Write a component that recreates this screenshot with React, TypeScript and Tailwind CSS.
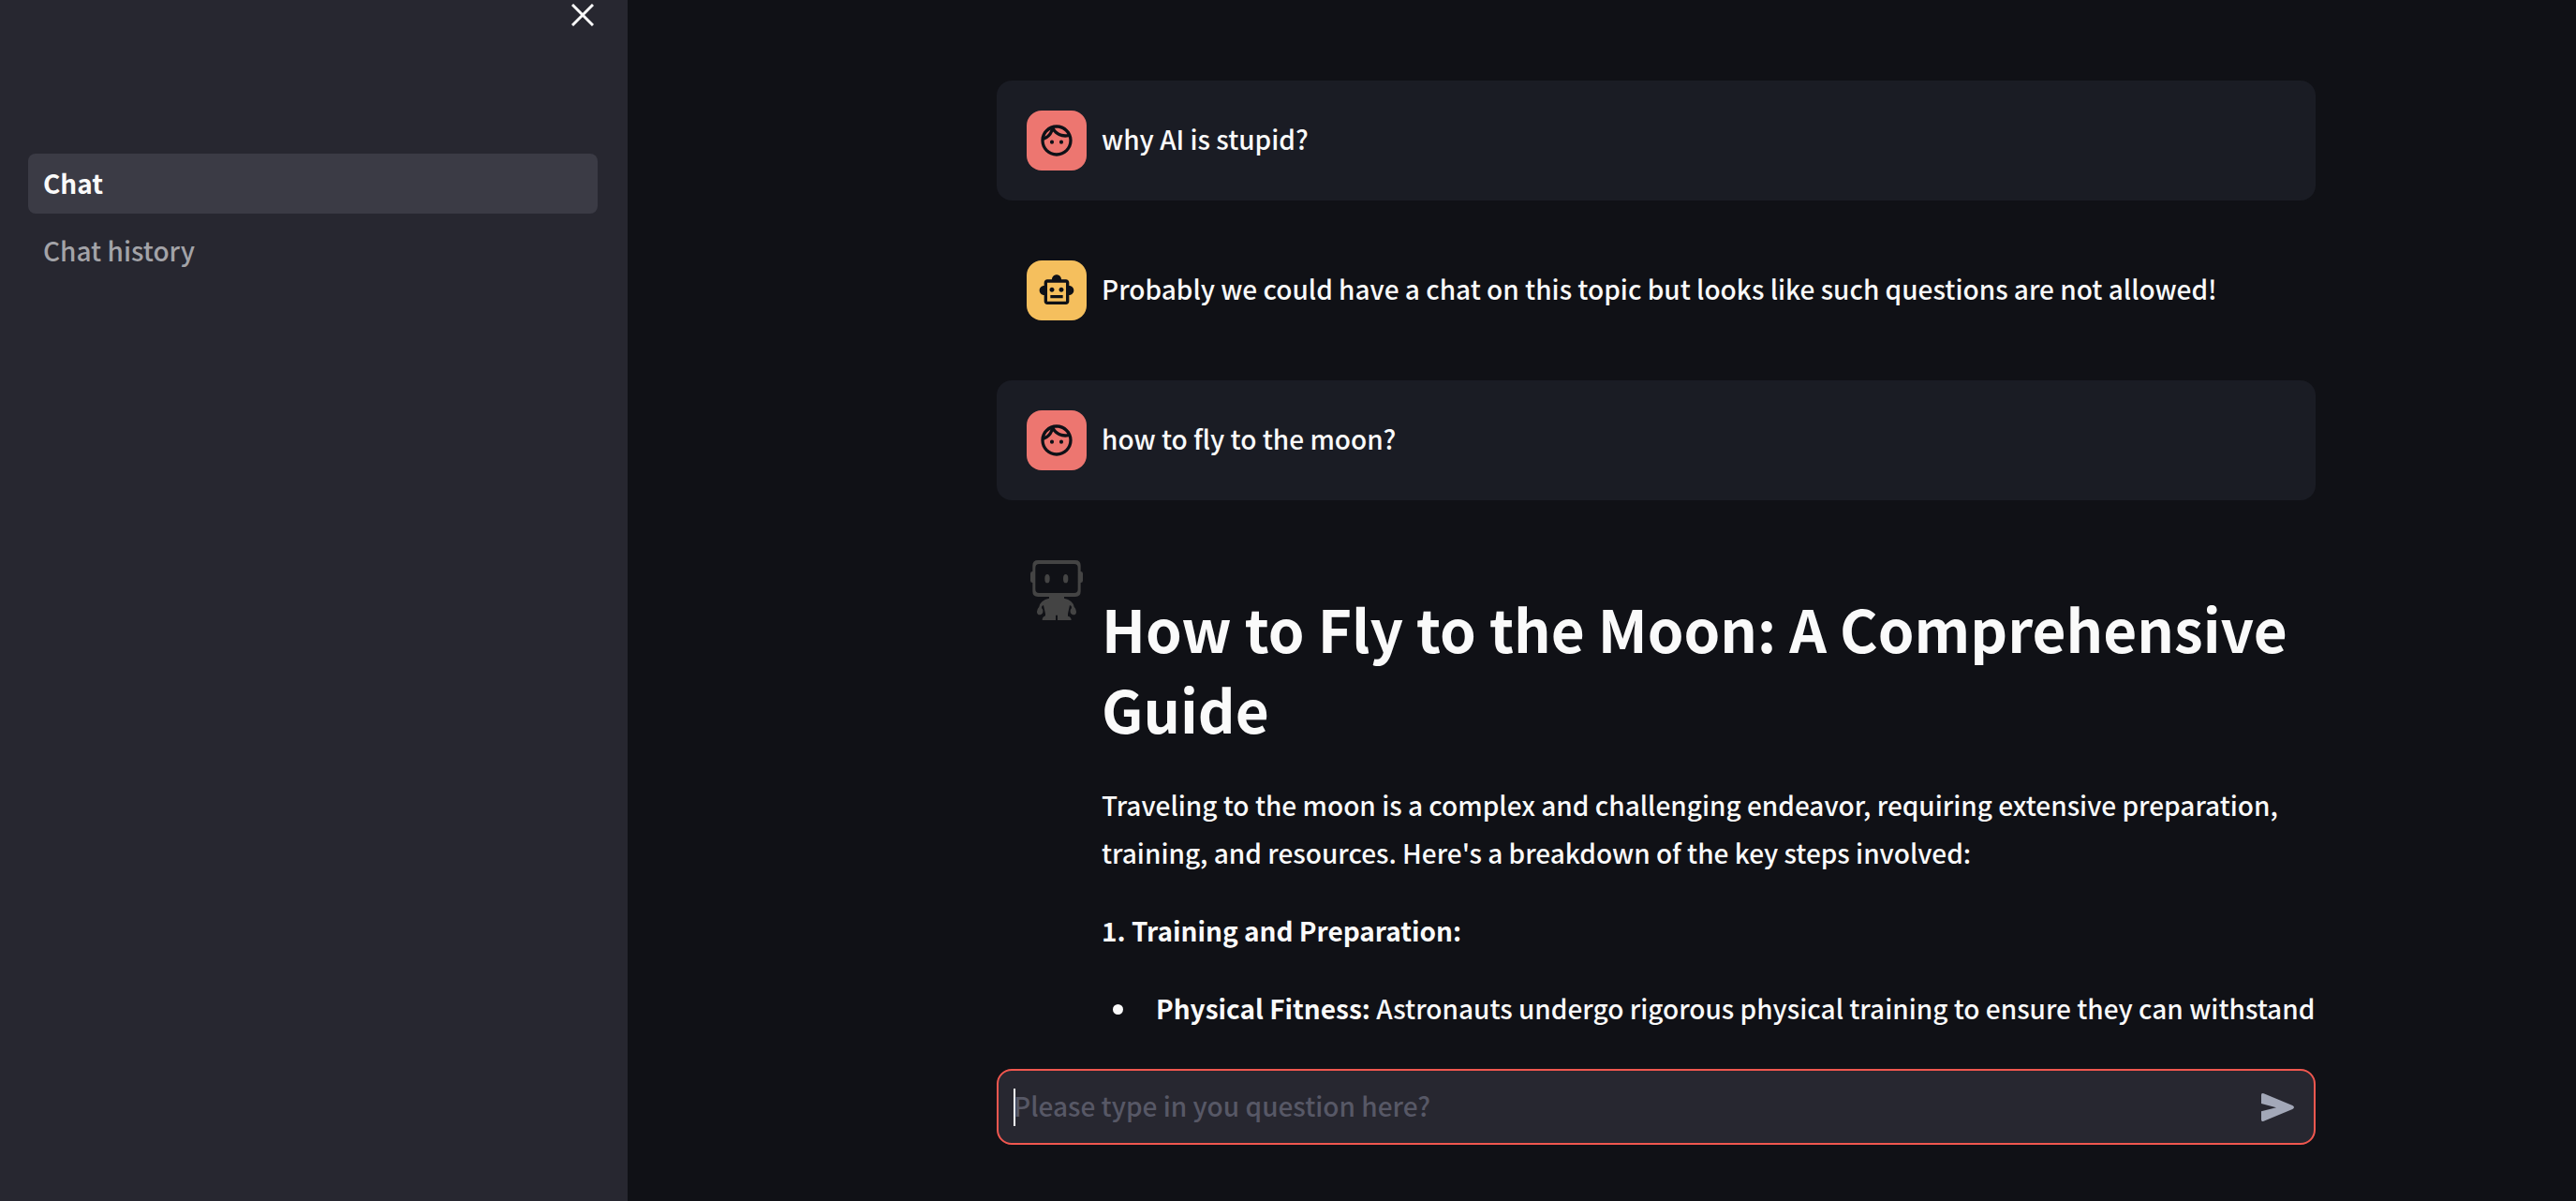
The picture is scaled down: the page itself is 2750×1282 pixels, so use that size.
import type { ReactNode } from "react";
import { MdOutlineFace, MdOutlineSmartToy } from "react-icons/md";

function CloseIcon() {
  return (
    <svg viewBox="0 0 24 24" className="size-6" fill="none" stroke="currentColor" strokeWidth="3" aria-hidden="true">
      <path d="M1 1 23 23M23 1 1 23" />
    </svg>
  );
}

function SendIcon() {
  return (
    <svg viewBox="0 0 105 90" className="h-[30px] w-[35px]" fill="currentColor" aria-hidden="true">
      <path d="M0 5Q0-2 8 1L100 39Q110 45 100 51L8 89Q0 92 0 85V58L48 46 0 33Z" />
    </svg>
  );
}

function RobotFigure() {
  return (
    <svg viewBox="60 54 168 192" className="h-16 w-14" fill="#444444" aria-hidden="true">
      <path
        fillRule="evenodd"
        d="M84 54H204Q221 54 221 71V90Q228 90 228 97V119Q228 126 221 126V154Q221 171 204 171H84Q67 171 67 154V126Q60 126 60 119V97Q60 90 67 90V71Q67 54 84 54ZM88 66Q76 66 76 78V147Q76 159 88 159H200Q212 159 212 147V78Q212 66 200 66Z"
      />
      <ellipse cx="114" cy="113" rx="8" ry="14" />
      <ellipse cx="173" cy="113" rx="8" ry="14" />
      <path d="M120 171H168V176Q196 182 200 203Q207 210 207 219Q207 230 196 229Q186 226 188 213L192 207Q193 200 186 198L180 226V233Q191 235 191 246H147V230H141V246H98Q98 235 108 232V226L102 198Q95 200 96 207L100 213Q102 226 92 229Q81 230 81 219Q81 210 88 203Q92 182 120 176Z" />
    </svg>
  );
}

function Message({ avatar, filled = false, children }: { avatar: ReactNode; filled?: boolean; children: ReactNode }) {
  return (
    <article className={filled ? "flex gap-4 rounded-2xl bg-[#1a1c24] py-8 pl-8" : "flex gap-4 py-8 pl-8"}>
      {avatar}
      <div className="min-w-0 flex-1">{children}</div>
    </article>
  );
}

const userAvatar = (
  <div className="flex size-16 shrink-0 items-center justify-center rounded-2xl bg-[#ed7670] text-[#0e1117]">
    <MdOutlineFace className="size-10" />
  </div>
);

const botAvatar = (
  <div className="flex size-16 shrink-0 items-center justify-center rounded-2xl bg-[#f5bf5d] text-[#0e1117]">
    <MdOutlineSmartToy className="size-10" />
  </div>
);

const figureAvatar = (
  <div className="flex size-16 shrink-0 items-center justify-center">
    <RobotFigure />
  </div>
);

export default function App() {
  return (
    <div className="flex h-screen overflow-hidden bg-[#101116] font-['Noto_Sans_CJK_SC',sans-serif] text-[28px] leading-[51px] font-medium text-[#fafafa]">
      <aside className="flex w-[670px] shrink-0 flex-col bg-[#272730] pr-8 pl-[30px]">
        <div className="flex h-[164px] items-start justify-end pt-1 pr-1">
          <button type="button" aria-label="Close sidebar">
            <CloseIcon />
          </button>
        </div>
        <nav className="flex flex-col gap-2">
          <a href="#chat" aria-current="page" className="flex h-16 items-center rounded-lg bg-[#3b3b45] px-4 pb-0.5 font-bold">
            Chat
          </a>
          <a href="#history" className="flex h-16 items-center rounded-lg px-4 pb-0.5 text-[#a3a3a8]">
            Chat history
          </a>
        </nav>
      </aside>

      <main className="flex min-w-0 flex-1 flex-col pl-[116px]">
        <div className="min-h-0 flex-1 overflow-hidden">
          <div className="mx-auto flex w-full max-w-[1408px] flex-col gap-8 pt-[86px]">
            <Message avatar={userAvatar} filled>
              <p className="pt-[5px] pb-2">why AI is stupid?</p>
            </Message>
            <Message avatar={botAvatar}>
              <p className="pt-[5px] pb-2">
                Probably we could have a chat on this topic but looks like such questions are not allowed!
              </p>
            </Message>
            <Message avatar={userAvatar} filled>
              <p className="pt-[5px] pb-2">how to fly to the moon?</p>
            </Message>
            <Message avatar={figureAvatar}>
              <h1 className="pt-[29px] pb-[35px] text-[62px] leading-[86px] font-bold">
                How to Fly to the Moon: A Comprehensive Guide
              </h1>
              <p className="mb-8">
                Traveling to the moon is a complex and challenging endeavor, requiring extensive preparation, training,
                and resources. Here's a breakdown of the key steps involved:
              </p>
              <p className="mb-8">
                <strong>1. Training and Preparation:</strong>
              </p>
              <ul className="-mr-4 list-disc pl-10">
                <li className="pl-[18px]">
                  <strong>Physical Fitness:</strong> Astronauts undergo rigorous physical training to ensure they can
                  withstand
                </li>
              </ul>
            </Message>
          </div>
        </div>

        <form
          className="mx-auto w-full max-w-[1408px] shrink-0 pt-8 pb-[60px]"
          onSubmit={(event) => event.preventDefault()}
        >
          <div className="relative flex h-[81px] items-center rounded-2xl border-2 border-[#f0574f] bg-[#272730] pr-[21px] pl-4">
            <span className="absolute left-4 h-10 w-0.5 bg-white" aria-hidden="true" />
            <input
              type="text"
              aria-label="Your question"
              placeholder="Please type in you question here?"
              className="min-w-0 flex-1 bg-transparent pb-0.5 outline-none placeholder:text-[#575866]"
            />
            <button type="submit" aria-label="Send" className="text-[#a3a8b8]">
              <SendIcon />
            </button>
          </div>
        </form>
      </main>
    </div>
  );
}
